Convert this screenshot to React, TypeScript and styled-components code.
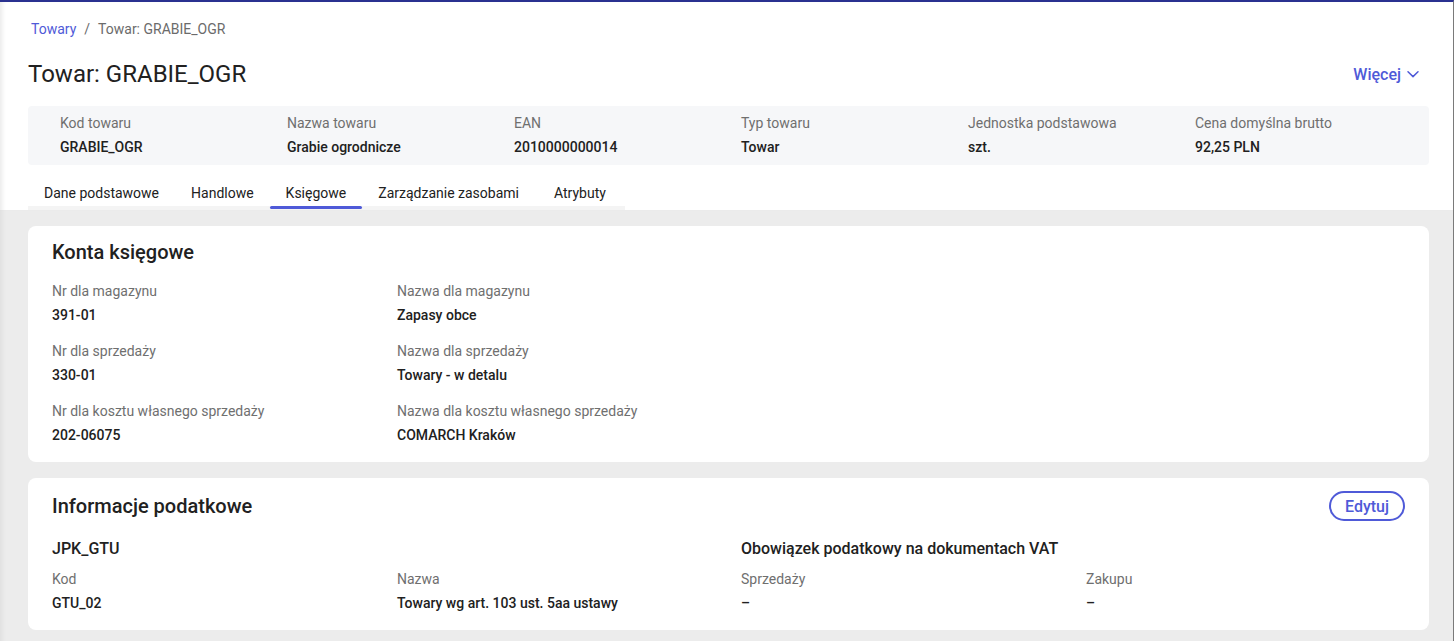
import React, { FunctionComponent } from 'react';
import styled, { createGlobalStyle } from 'styled-components';

const GlobalStyle = createGlobalStyle`
    html, body {
        margin: 0;
        padding: 0;
        height: 100%;
        overflow: hidden;
        font-family: Roboto, 'Noto Sans', Arial, sans-serif;
        color: #212121;
        background: #ffffff;
    }
`;

const BLUE = '#4f5ad8';

export const Page = styled.div`
    min-height: 100vh;
    display: flex;
    flex-direction: column;
    border-top: 2px solid #2a3190;
    border-right: 1px solid #7a7a7a;
    box-sizing: border-box;
    box-shadow: inset 5px 0 5px -3px rgba(0, 0, 0, 0.09);
`;

export const Header = styled.header`
    display: flex;
    flex-direction: column;
    padding: 17px 24px 0 28px;
`;

export const Breadcrumb = styled.nav`
    display: flex;
    align-items: center;
    gap: 8px;
    padding-left: 3px;
    font-size: 14px;
    line-height: 20px;
    color: #6b6b6b;
`;

export const CrumbLink = styled.a`
    color: ${BLUE};
    text-decoration: none;
`;

export const TitleRow = styled.div`
    display: flex;
    align-items: center;
    justify-content: space-between;
    margin-top: 19px;
    height: 32px;
`;

export const Title = styled.h1`
    margin: 0;
    font-size: 24px;
    line-height: 32px;
    font-weight: 400;
    color: #212121;
`;

export const MoreButton = styled.button`
    display: flex;
    align-items: center;
    gap: 5px;
    border: none;
    background: none;
    padding: 4px 9px 4px 10px;
    font-family: inherit;
    font-size: 16px;
    font-weight: 500;
    color: ${BLUE};
    cursor: pointer;
`;

export const InfoBox = styled.div`
    display: grid;
    grid-template-columns: repeat(6, 227px);
    margin-top: 16px;
    padding: 7px 32px 8px;
    background: #f6f7f9;
    border-radius: 4px;
`;

export const Field = styled.div`
    display: flex;
    flex-direction: column;
    gap: 4px;
`;

export const Label = styled.span`
    font-size: 14px;
    line-height: 20px;
    color: #6f6f6f;
`;

export const Value = styled.span`
    font-size: 14px;
    line-height: 20px;
    font-weight: 500;
    color: #212121;
`;

export const TabsRow = styled.div`
    display: flex;
    align-self: flex-start;
    margin-top: 12px;
    border-bottom: 4px solid #f4f4f4;
`;

export const Tab = styled.div<{ $active?: boolean }>`
    position: relative;
    padding: 6px 16px 3px;
    font-size: 14px;
    line-height: 20px;
    color: #212121;
    cursor: pointer;

    &:last-child {
        padding: 6px 19px 3px 19px;
    }

    &::after {
        content: '';
        display: ${(props) => (props.$active ? 'block' : 'none')};
        position: absolute;
        left: 0;
        right: 0;
        bottom: -3px;
        height: 3px;
        border-radius: 2px;
        background: ${BLUE};
    }
`;

export const Content = styled.main`
    flex: 1;
    display: flex;
    flex-direction: column;
    gap: 16px;
    padding: 16px 24px 16px 28px;
    background: #ececec;
    box-shadow: inset 5px 0 5px -3px rgba(0, 0, 0, 0.06);
`;

export const Card = styled.section`
    background: #ffffff;
    border-radius: 8px;
    padding: 12px 24px 17px;
`;

export const CardHeader = styled.div`
    display: flex;
    align-items: center;
    justify-content: space-between;
    min-height: 28px;
`;

export const CardTitle = styled.h2`
    margin: 0;
    font-size: 20px;
    line-height: 24px;
    font-weight: 500;
    color: #212121;
`;

export const OutlineButton = styled.button`
    height: 30px;
    margin: 1px 0;
    padding: 0 14px;
    border: 2px solid ${BLUE};
    border-radius: 15px;
    background: #ffffff;
    font-family: inherit;
    font-size: 16px;
    font-weight: 500;
    color: ${BLUE};
    cursor: pointer;
`;

export const FieldGrid = styled.div<{ $top: number }>`
    display: grid;
    grid-template-columns: repeat(2, 345px);
    row-gap: 16px;
    margin-top: ${(props) => props.$top}px;
`;

export const GroupRow = styled.div`
    display: grid;
    grid-template-columns: repeat(2, 689px);
    margin-top: 17px;
`;

export const Group = styled.div`
    display: flex;
    flex-direction: column;
`;

export const GroupTitle = styled.h3`
    margin: 0;
    font-size: 16px;
    line-height: 20px;
    font-weight: 500;
    color: #212121;
`;

const ChevronDown = () => (
    <svg width="14" height="14" viewBox="0 0 14 14" fill="none">
        <path d="M2 4.8 L7 9.6 L12 4.8" stroke="currentColor" strokeWidth="1.5" strokeLinecap="round" strokeLinejoin="round" />
    </svg>
);

const InfoField: FunctionComponent<{ label: string; value: string }> = ({ label, value }) => (
    <Field>
        <Label>{label}</Label>
        <Value>{value}</Value>
    </Field>
);

const summary = [
    ['Kod towaru', 'GRABIE_OGR'],
    ['Nazwa towaru', 'Grabie ogrodnicze'],
    ['EAN', '2010000000014'],
    ['Typ towaru', 'Towar'],
    ['Jednostka podstawowa', 'szt.'],
    ['Cena domyślna brutto', '92,25 PLN'],
];

const tabs = ['Dane podstawowe', 'Handlowe', 'Księgowe', 'Zarządzanie zasobami', 'Atrybuty'];

const accounts = [
    ['Nr dla magazynu', '391-01'],
    ['Nazwa dla magazynu', 'Zapasy obce'],
    ['Nr dla sprzedaży', '330-01'],
    ['Nazwa dla sprzedaży', 'Towary - w detalu'],
    ['Nr dla kosztu własnego sprzedaży', '202-06075'],
    ['Nazwa dla kosztu własnego sprzedaży', 'COMARCH Kraków'],
];

export const App: FunctionComponent = () => {
    return (
        <Page>
            <GlobalStyle />
            <Header>
                <Breadcrumb>
                    <CrumbLink href="#">Towary</CrumbLink>
                    <span>/</span>
                    <span>Towar: GRABIE_OGR</span>
                </Breadcrumb>
                <TitleRow>
                    <Title>Towar: GRABIE_OGR</Title>
                    <MoreButton>
                        Więcej
                        <ChevronDown />
                    </MoreButton>
                </TitleRow>
                <InfoBox>
                    {summary.map(([label, value]) => (
                        <InfoField key={label} label={label} value={value} />
                    ))}
                </InfoBox>
                <TabsRow>
                    {tabs.map((tab) => (
                        <Tab key={tab} $active={tab === 'Księgowe'}>
                            {tab}
                        </Tab>
                    ))}
                </TabsRow>
            </Header>
            <Content>
                <Card>
                    <CardHeader>
                        <CardTitle>Konta księgowe</CardTitle>
                    </CardHeader>
                    <FieldGrid $top={15}>
                        {accounts.map(([label, value]) => (
                            <InfoField key={label} label={label} value={value} />
                        ))}
                    </FieldGrid>
                </Card>
                <Card>
                    <CardHeader>
                        <CardTitle>Informacje podatkowe</CardTitle>
                        <OutlineButton>Edytuj</OutlineButton>
                    </CardHeader>
                    <GroupRow>
                        <Group>
                            <GroupTitle>JPK_GTU</GroupTitle>
                            <FieldGrid $top={10}>
                                <InfoField label="Kod" value="GTU_02" />
                                <InfoField label="Nazwa" value="Towary wg art. 103 ust. 5aa ustawy" />
                            </FieldGrid>
                        </Group>
                        <Group>
                            <GroupTitle>Obowiązek podatkowy na dokumentach VAT</GroupTitle>
                            <FieldGrid $top={10}>
                                <InfoField label="Sprzedaży" value="–" />
                                <InfoField label="Zakupu" value="–" />
                            </FieldGrid>
                        </Group>
                    </GroupRow>
                </Card>
            </Content>
        </Page>
    );
};

export default App;
